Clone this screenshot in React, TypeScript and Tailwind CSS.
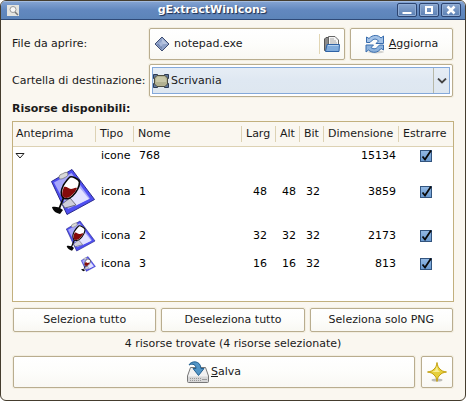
import { useState, type ReactNode } from "react";

type Resource = {
  kind: string;
  name: string;
  width?: number;
  height?: number;
  bits?: number;
  size: number;
  row: string;
  icon?: string;
};

const resources: Resource[] = [
  { kind: "icone", name: "768", size: 15134, row: "h-5" },
  { kind: "icona", name: "1", width: 48, height: 48, bits: 32, size: 3859, row: "h-[52px]", icon: "size-12" },
  { kind: "icona", name: "2", width: 32, height: 32, bits: 32, size: 2173, row: "h-9", icon: "size-8" },
  { kind: "icona", name: "3", width: 16, height: 16, bits: 32, size: 813, row: "h-5", icon: "size-4" },
];

const frame =
  "rounded-[2px] border border-[#b9ad8f] bg-linear-to-b from-white via-[#fdfdfb] to-[#f9f8f3] shadow-[0_0_0_1px_#f3eee0]";

function WineIcon({ className }: { className: string }) {
  return (
    <svg viewBox="0 0 48 48" className={className} aria-hidden="true">
      <path d="M3.500 13.500 24 1.500 46.500 31.500 19 46.500Z" fill="#4f4ff2" stroke="#2c2c8c" />
      <path d="M6 14.500 23.500 5 42 30.500 20 41Z" fill="#a8a8fb" />
      <path d="M27 14 41 31 27 38 20 32Z" fill="#e2e2ff" />
      <path d="m22 30 6 7-11 3-3-4Z" fill="#cfcfda" stroke="#55556a" strokeWidth=".8" />
      <path d="M11 9c0-3 4-3 5-4s4-1 4 1-2 3-4 4-5 2-5-1Z" fill="#d8d8d8" stroke="#777" strokeWidth=".8" />
      <path d="M22 9c2-1 9 2 9.500 5 0 6-3 10-7 14-3 3-8 4-10 1s-1-8 1-12c2-3 4-6 6.500-8Z" fill="#fff" stroke="#080808" strokeWidth="1.600" />
      <path d="M16 19c3-1 4 2 7 2 2 0 4-2 6-1-1 3-3 5-5.500 7.500-3 3-7 3-8.500 1s-.5-6 1-9.500Z" fill="#850a0a" />
      <path d="M15.500 30 11 41" stroke="#080808" strokeWidth="1.800" />
      <path d="M4 39c3-1 8 0 11 3l-3 4c-4-1-7-3-8-7Z" fill="#080808" />
    </svg>
  );
}

function FileIcon() {
  return (
    <svg viewBox="0 0 16 16" className="size-4 shrink-0" aria-hidden="true">
      <path d="M8 1 15 8 8 15 1 8Z" fill="#8fa2c8" stroke="#3e4d72" />
      <path d="M8 2.500 13.500 8 8 8Z" fill="#b9c6e0" />
      <path d="M2.500 8 8 8v5.500Z" fill="#7488b2" />
      <path d="m5 8 3-3 1 3-2 3Z" fill="#a9b9da" />
    </svg>
  );
}

function OpenIcon() {
  return (
    <svg viewBox="0 0 16 16" className="size-4 shrink-0" aria-hidden="true">
      <path d="M.5 14.500V3L2 1.500h4V14.500Z" fill="#8a8a8a" stroke="#555" />
      <path d="M4.500 9V.5H11L14.500 4v5Z" fill="#f4f4f4" stroke="#666" />
      <path d="M6 3h4M6 5h6M6 7h7" stroke="#aaa" />
      <path d="M3 8.500h12.500l-.5 7H1.500Z" fill="#7fabdc" stroke="#2f62a5" />
      <path d="M4 9.500h10.500" stroke="#b5d1ee" />
    </svg>
  );
}

function DesktopIcon() {
  return (
    <svg viewBox="0 0 16 16" className="size-4" aria-hidden="true">
      <path d="M.5 1.500h4v4h-4ZM11.500 1.500h4v4h-4ZM.5 10.500h4v4h-4ZM11.500 10.500h4v4h-4Z" fill="#60779b" stroke="#2c3b55" />
      <path d="M4 2.500h8L14.500 5v6L12 13.500H4L1.500 11V5Z" fill="#b2b191" stroke="#4c4d40" />
      <path d="M4.500 4h7L13 6v3H3V6Z" fill="#c8c7a8" />
    </svg>
  );
}

function RefreshIcon() {
  return (
    <svg viewBox="0 0 20 20" className="size-5 shrink-0" aria-hidden="true">
      <ellipse cx="11" cy="18" rx="8" ry="1.500" fill="#d3d3d0" />
      <path d="M1.500 8.500V3L4 4.500C7.500.5 13 .5 16 4l2.500-2v7.500H11L13.500 7C11.500 4.500 8.500 4.500 6.500 7L5 8.500Z" fill="#a3c2e6" stroke="#386cad" />
      <path d="M1 11h7.500L6 13.500c2.500 2 5.500 1.500 7-1l1.500-1.500h4V16L16 14.500c-3 4.500-8.500 5-12.500 1.500L1 18Z" fill="#8db3dd" stroke="#386cad" />
    </svg>
  );
}

function SaveIcon() {
  return (
    <svg viewBox="0 0 22 22" className="size-[22px] shrink-0" aria-hidden="true">
      <path d="M3.500 6.500h15l3 8.500v5.500q0 1-1 1h-19q-1 0-1-1V15Z" fill="#f1f1f1" stroke="#777" />
      <path d="M1 15.500h20V21H1Z" fill="#d6d6d6" />
      <path d="M3 17.500h11M3 19.500h11" stroke="#999" strokeDasharray="1 1" />
      <path d="M15 18.500h5" stroke="#999" />
      <path d="M2 4C4-.5 13.500-1 14 7.500h3l-5.500 7-5.500-7h3C9 4 6 2 2 4Z" fill="#5295c6" stroke="#25608f" />
    </svg>
  );
}

function StarIcon() {
  return (
    <svg viewBox="0 0 20 20" className="size-5" aria-hidden="true">
      <ellipse cx="10" cy="18" rx="5.500" ry="1.500" fill="#bdbcb7" />
      <path d="M10 .5C10.500 4 11.500 6 13 7c1 1.500 3 2.500 6.500 3-3.500.5-5.500 1.500-6.500 3-1.500 1-2.500 3-3 6.500-.5-3.500-1.500-5.500-3-6.500-1-1.500-3-2.500-6.500-3C4 9.500 6 8.500 7 7 8.500 6 9.500 4 10 .5Z" fill="#e6cf3c" stroke="#c3a010" />
      <path d="M10 4 11 8l2 2H5l3-1.500Z" fill="#f8ee92" />
    </svg>
  );
}

function TitleButton({ label, children }: { label: string; children: ReactNode }) {
  return (
    <button
      type="button"
      aria-label={label}
      className="flex h-3.5 w-5 items-center justify-center rounded-[2px] border border-[#2c4470] bg-linear-to-b from-[#8aa6cf] to-[#5b80b4] shadow-[inset_0_0_0_1px_#90acd4]"
    >
      <svg viewBox="0 0 12 10" className="h-2.5 w-3" aria-hidden="true">
        {children}
      </svg>
    </button>
  );
}

function TickBox({ label }: { label: string }) {
  const [on, setOn] = useState(true);
  return (
    <span className="relative mx-auto block size-3">
      <input
        type="checkbox"
        aria-label={label}
        checked={on}
        onChange={() => setOn(!on)}
        className="peer block size-3 appearance-none border border-[#33557f] bg-white checked:bg-linear-to-b checked:from-[#92b8e3] checked:to-[#6a9ad0]"
      />
      <svg viewBox="0 0 12 12" className="pointer-events-none invisible absolute inset-0 size-3 overflow-visible peer-checked:visible" aria-hidden="true">
        <path d="M2.500 6.500 5 9.500 11 .5" fill="none" stroke="#0a0a0a" strokeWidth="1.800" />
      </svg>
    </span>
  );
}

const headings = ["Anteprima", "Tipo", "Nome", "Larg", "Alt", "Bit", "Dimensione", "Estrarre"];

export default function App() {
  return (
    <div className="overflow-hidden rounded-[6px] border border-[#453d2e] bg-[#faf7f0] font-['DejaVu_Sans',sans-serif] text-[11px] leading-4 text-[#1a1a1a]">
      <header className="flex h-[19px] items-center border-b border-[#2f4a78] bg-linear-to-b from-[#86a5d3] via-[#6288bf] to-[#5c84b9] pr-1 pl-1.5 shadow-[inset_0_1px_0_#a3bbdf]">
        <div className="w-5">
          <svg viewBox="0 0 12 11" className="h-[11px] w-3" aria-hidden="true">
            <path d="M0 0h12v11H0Z" fill="#e4e4e0" />
            <circle cx="6" cy="4.500" r="3" fill="#f8f8f8" stroke="#999" />
            <path d="m8 7 3 3" stroke="#777" strokeWidth="1.500" />
          </svg>
        </div>
        <h1 className="flex-1 text-center font-bold text-white [text-shadow:1px_1px_1px_#1c2c4c]">gExtractWinIcons</h1>
        <div className="flex justify-end gap-0.5">
          <TitleButton label="Riduci">
            <path d="M1.500 8h9" stroke="#fff" strokeWidth="2" />
          </TitleButton>
          <TitleButton label="Ingrandisci">
            <path d="M3 2h6v6H3Z" fill="none" stroke="#fff" strokeWidth="2" />
          </TitleButton>
          <TitleButton label="Chiudi">
            <path d="m2.500 1.500 7 7M9.500 1.500l-7 7" stroke="#fff" strokeWidth="2.500" />
          </TitleButton>
        </div>
      </header>

      <main className="px-[11px] pt-2 pb-3">
        <div className="grid grid-cols-[132px_1fr] items-center gap-x-[5px] gap-y-1 pr-px">
          <label htmlFor="file" className="whitespace-nowrap">File da aprire:</label>
          <div className="flex gap-[5px]">
            <button id="file" type="button" className={`${frame} flex h-8 flex-1 items-center gap-1 px-1`}>
              <FileIcon />
              <span className="flex-1 text-left">notepad.exe</span>
              <span className="flex h-5 items-center border-l border-[#e2d6b4] pl-1">
                <OpenIcon />
              </span>
            </button>
            <button type="button" className={`${frame} flex h-8 w-[103px] items-center justify-center gap-1`}>
              <RefreshIcon />
              <span><u>A</u>ggiorna</span>
            </button>
          </div>
          <label htmlFor="folder" className="whitespace-nowrap">Cartella di destinazione:</label>
          <div className="relative rounded-[2px] border border-[#b9ad8f] bg-white p-0.5 shadow-[0_0_0_1px_#f3eee0]">
            <select
              id="folder"
              className="block h-[27px] w-full appearance-none border border-[#84a9da] bg-linear-to-b from-[#e6edf5] via-[#dfe8f2] to-[#dee7f0] pl-[18px]"
            >
              <option>Scrivania</option>
            </select>
            <span className="pointer-events-none absolute inset-y-0 left-[3px] flex items-center">
              <DesktopIcon />
            </span>
            <span className="pointer-events-none absolute inset-y-[3px] right-[3px] flex w-4 items-center justify-center border-l border-[#b7b8a8]">
              <svg viewBox="0 0 10 6" className="h-1.5 w-2.5" aria-hidden="true">
                <path d="m1 .5 4 4 4-4" fill="none" stroke="#444" strokeWidth="1.800" />
              </svg>
            </span>
          </div>
        </div>

        <h2 className="mt-1 font-bold">Risorse disponibili:</h2>

        <div className="mt-1 min-h-[181px] border border-[#c2b07e] bg-white text-black">
          <table className="w-full table-fixed border-collapse">
            <colgroup>
              <col className="w-[83px]" />
              <col className="w-[38px]" />
              <col />
              <col className="w-[34px]" />
              <col className="w-6" />
              <col className="w-6" />
              <col className="w-[75px]" />
              <col className="w-[54px]" />
            </colgroup>
            <thead>
              <tr className="h-6 border-b border-[#ddd2b4] bg-[#faf7f0] text-left text-[#1a1a1a]">
                {headings.map((h, i) => (
                  <th key={h} scope="col" className="p-0 font-normal">
                    <span className={`block whitespace-nowrap border-[#ddd2b4] ${i === 0 ? "pl-[3px]" : "pl-1"} ${i < 7 ? "border-r" : ""}`}>{h}</span>
                  </th>
                ))}
              </tr>
            </thead>
            <tbody>
              {resources.map((r) => (
                <tr key={r.name} className={r.row}>
                  <td className="p-0">
                    {r.icon ? (
                      <span className="flex justify-end"><WineIcon className={r.icon} /></span>
                    ) : (
                      <svg viewBox="0 0 10 6" className="ml-0.5 h-1.5 w-2.5" aria-hidden="true">
                        <path d="M1 .5h8L5 5Z" fill="#fff" stroke="#222" />
                      </svg>
                    )}
                  </td>
                  <td className="p-0 pl-[5px]">{r.kind}</td>
                  <td className="p-0 pl-[5px]">{r.name}</td>
                  <td className="p-0 pr-[9px] text-right">{r.width}</td>
                  <td className="p-0 pr-1 text-right">{r.height}</td>
                  <td className="p-0 pr-1 text-right">{r.bits}</td>
                  <td className="p-0 pr-[3px] text-right">{r.size}</td>
                  <td className="p-0"><TickBox label={`Estrarre ${r.name}`} /></td>
                </tr>
              ))}
            </tbody>
          </table>
        </div>

        <div className="mt-1.5 grid grid-cols-3 gap-[5px] px-px">
          {["Seleziona tutto", "Deseleziona tutto", "Seleziona solo PNG"].map((t) => (
            <button key={t} type="button" className={`${frame} h-6 whitespace-nowrap`}>{t}</button>
          ))}
        </div>
        <p className="my-1 text-center">4 risorse trovate (4 risorse selezionate)</p>
        <div className="flex gap-1.5 px-px">
          <button type="button" className={`${frame} flex h-8 flex-1 items-center justify-center gap-0.5`}>
            <SaveIcon />
            <span><u>S</u>alva</span>
          </button>
          <button type="button" aria-label="Informazioni" className={`${frame} flex size-8 items-center justify-center`}>
            <StarIcon />
          </button>
        </div>
      </main>
    </div>
  );
}
